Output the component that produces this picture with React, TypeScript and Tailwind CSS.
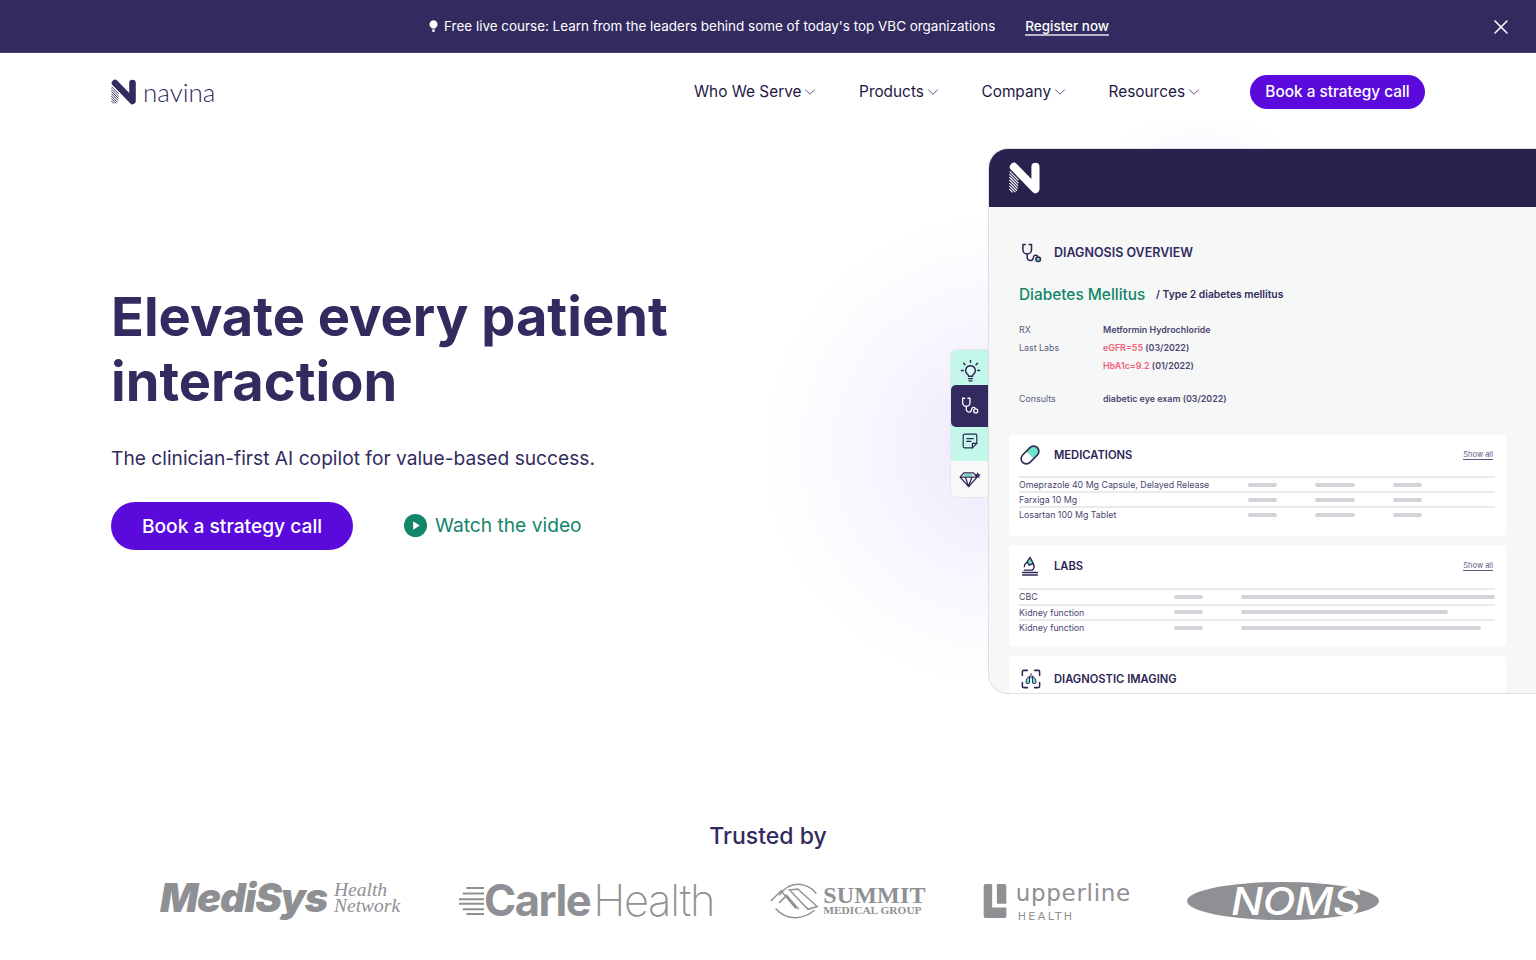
import { ChevronDown, X } from 'lucide-react';

const navItems = ['Who We Serve', 'Products', 'Company', 'Resources'];

const medications = ['Omeprazole 40 Mg Capsule, Delayed Release', 'Farxiga 10 Mg', 'Losartan 100 Mg Tablet'];

const labs = [
  { name: 'CBC', width: 'w-[254px]' },
  { name: 'Kidney function', width: 'w-[207px]' },
  { name: 'Kidney function', width: 'w-[240px]' },
];

function NLogo({ className, color }: { className: string; color: string }) {
  return (
    <svg viewBox="0 0 26 26" className={className} fill="none">
      <path d="M4 4 L21.5 22 L21.5 4" stroke={color} strokeWidth="6.6" strokeLinecap="round" strokeLinejoin="round" />
      <g stroke={color} strokeWidth="0.9" strokeLinecap="round">
        <path d="M0.8 8 L7.4 14.6" />
        <path d="M0.6 10.2 L7.4 17" />
        <path d="M0.6 12.6 L7.2 19.2" />
        <path d="M0.6 15 L6.8 21.2" />
        <path d="M0.6 17.4 L6.2 23" />
        <path d="M0.6 19.8 L5 24.2" />
        <path d="M0.6 22.2 L2.8 24.4" />
      </g>
    </svg>
  );
}

function Scope({ className, color, dot }: { className: string; color: string; dot: string }) {
  return (
    <svg viewBox="0 0 22 22" className={className} fill="none" stroke={color} strokeWidth="1.6" strokeLinecap="round" strokeLinejoin="round">
      <path d="M4.5 1.5H2v5.5a4.5 4.5 0 0 0 9 0V1.5H8.5" />
      <path d="M6.5 11.5v3.5a3.2 3.2 0 0 0 6.4 .4c.1-1.5 .6-2.4 2.1-2.6 .8-.1 1.6 .1 2.2 .9" />
      <circle cx="18" cy="17" r="2.4" fill={dot} />
    </svg>
  );
}

function Bar({ className }: { className: string }) {
  return <div className={`h-[4px] rounded-full bg-[#d3d4d9] ${className}`} />;
}

function ShowAll() {
  return <span className="ml-auto mr-[13px] border-b border-[#5d5880] text-[7.5px] leading-[9px] text-[#5d5880]">Show all</span>;
}

function Bulb() {
  return (
    <svg viewBox="0 0 24 24" className="mt-[6px] h-[23px] w-[23px]" fill="none" stroke="#2d2655" strokeWidth="1.5" strokeLinecap="round">
      <path d="M12 7a5 5 0 0 0-3 9c.8.7 1 1.3 1 2h4c0-.7.2-1.3 1-2a5 5 0 0 0-3-9z" fill="#d8fbf2" />
      <path d="M10 20.5h4M10.5 22.8h3" />
      <path d="M12 1.5v2M4.8 4.5l1.4 1.4M19.2 4.5l-1.4 1.4M2.5 12h2M19.5 12h2" />
    </svg>
  );
}

function DocIcon() {
  return (
    <svg viewBox="0 0 20 20" className="mb-[6px] h-[16px] w-[16px]" fill="none" stroke="#2d2655" strokeWidth="1.5" strokeLinecap="round" strokeLinejoin="round">
      <path d="M3 1.5h14A1.5 1.5 0 0 1 18.5 3v10l-5.5 5.5H3A1.5 1.5 0 0 1 1.5 17V3A1.5 1.5 0 0 1 3 1.5z" />
      <path d="M13 18.5V13h5.5" />
      <path d="M6 7h8M6 10.5h5" />
    </svg>
  );
}

function Diamond() {
  return (
    <svg viewBox="0 0 24 18" className="h-[17px] w-[23px]" fill="none" stroke="#2d2655" strokeWidth="1.4" strokeLinejoin="round">
      <path d="M5 2h10l4 4.5L10 16.5 1 6.5z" />
      <path d="M1 6.5h18M6.5 6.5L10 16.5l3.5-10" />
      <path d="M5 4.2h9" stroke="#35d0a8" strokeWidth="1.6" />
      <path d="M19.5 1l1 2.4 2.5.2-1.9 1.6.6 2.5-2.2-1.3-2.2 1.3.6-2.5L16 3.6l2.5-.2z" fill="#2d2655" stroke="none" />
    </svg>
  );
}

function Capsule() {
  return (
    <svg viewBox="0 0 22 22" className="h-[22px] w-[22px]" fill="none" stroke="#2d2655" strokeWidth="1.6">
      <g transform="rotate(-45 11 11)">
        <path d="M11 5.8h5.2a5.2 5.2 0 0 1 0 10.4H11z" fill="#6fe3c8" stroke="none" />
        <rect x="0.6" y="5.8" width="20.8" height="10.4" rx="5.2" />
      </g>
    </svg>
  );
}

function Microscope() {
  return (
    <svg viewBox="0 0 22 24" className="ml-[2px] h-[22px] w-[18px]" fill="none" stroke="#2d2655" strokeWidth="1.7" strokeLinecap="round" strokeLinejoin="round">
      <path d="M11 1.5l4 7.5-5 2-2.5-4z" fill="#6fe3c8" />
      <path d="M14.5 9a6 6 0 0 1-.5 8H4M7 8a6 6 0 0 0-3 5" />
      <path d="M2 20h18M2 23h18" />
    </svg>
  );
}

function Lungs() {
  return (
    <svg viewBox="0 0 22 22" className="ml-[2px] h-[20px] w-[20px]" fill="none" stroke="#2d2655" strokeWidth="1.7" strokeLinecap="round">
      <path d="M7 1.5H3A1.5 1.5 0 0 0 1.5 3v4M15 1.5h4A1.5 1.5 0 0 1 20.5 3v4M1.5 15v4A1.5 1.5 0 0 0 3 20.5h4M20.5 15v4a1.5 1.5 0 0 1-1.5 1.5h-4" />
      <path d="M9 8c-2 1-3.5 4-3.5 7 0 1 1 1.5 3.5.5zM13 8c2 1 3.5 4 3.5 7 0 1-1 1.5-3.5.5z" fill="#6fe3c8" strokeWidth="1.1" />
      <path d="M11 5v5" strokeWidth="1.1" />
    </svg>
  );
}

function PanelTitle({ icon, title, showAll }: { icon: React.ReactNode; title: string; showAll?: boolean }) {
  return (
    <div className="flex h-[38px] items-center">
      <div className="flex w-[35px] shrink-0 items-center">{icon}</div>
      <span className="text-[11.2px] font-semibold text-[#2d2655]">{title}</span>
      {showAll && <ShowAll />}
    </div>
  );
}

function Row({ children, tall }: { children: React.ReactNode; tall?: boolean }) {
  return (
    <div className={`flex w-[476px] items-center border-t-2 border-[#e9eaec] text-[8.8px] text-[#4b4670] ${tall ? 'h-[15.5px]' : 'h-[15.2px]'}`}>{children}</div>
  );
}

function PatientCard() {
  return (
    <div className="relative ml-auto mt-[17px] h-[546px] w-[548px] shrink-0">
      {/* Side tabs */}
      <div className="absolute left-[-37px] top-[202px] flex h-[147px] w-[38px] flex-col overflow-hidden rounded-l-[5px] bg-[#f8f8f9] shadow-[0_0_0_1px_#e6e6eb]">
        <div className="flex h-[111px] flex-col bg-[#c2f7ea]">
          <div className="flex h-[35px] items-center justify-center"><Bulb /></div>
          <div className="flex h-[42px] items-center justify-center rounded-l-[5px] bg-[#332b60]">
            <Scope className="h-[18px] w-[18px]" color="#ffffff" dot="#332b60" />
          </div>
          <div className="flex h-[34px] items-center justify-center"><DocIcon /></div>
        </div>
        <div className="flex flex-1 items-center justify-center"><Diamond /></div>
      </div>

      <div className="relative h-full overflow-hidden rounded-l-[20px] border border-r-0 border-[#dfe0e6] bg-[#f6f8f7]">
        <div className="flex h-[58px] items-center bg-[#27224e] pl-[20px]">
          <NLogo className="h-[32px] w-[32px]" color="#ffffff" />
        </div>

        <div className="pl-[30px] pt-[36px]">
          <div className="flex items-center">
            <Scope className="ml-[2px] h-[21px] w-[21px]" color="#2d2655" dot="#6fe3c8" />
            <span className="ml-[12px] text-[12.5px] font-semibold text-[#332b60]">DIAGNOSIS OVERVIEW</span>
          </div>
          <div className="mt-[19px] flex items-center">
            <span className="w-[137px] text-[15.4px] font-medium text-[#13866a]">Diabetes Mellitus</span>
            <span className="text-[10.3px] font-semibold text-[#332b60]">/ Type 2 diabetes mellitus</span>
          </div>
          <div className="mt-[15px] grid grid-cols-[84px_1fr] text-[8.9px] leading-[18px]">
            <span className="text-[#5d5880]">RX</span>
            <span className="font-semibold text-[#4b4670]">Metformin Hydrochloride</span>
            <span className="text-[#5d5880]">Last Labs</span>
            <span className="font-semibold text-[#4b4670]"><span className="text-[#f2607a]">eGFR=55</span> (03/2022)</span>
            <span />
            <span className="font-semibold text-[#4b4670]"><span className="text-[#f2607a]">HbA1c=9.2</span> (01/2022)</span>
            <span className="mt-[15px] text-[#5d5880]">Consults</span>
            <span className="mt-[15px] font-semibold text-[#4b4670]">diabetic eye exam (03/2022)</span>
          </div>
        </div>

        <div className="ml-[20px] mt-[27px] flex w-[497px] flex-col gap-[9px]">
          <div className="h-[101px] rounded-[4px] bg-white pl-[10px] pt-[1px]">
            <PanelTitle icon={<Capsule />} title="MEDICATIONS" showAll />
            <div className="mt-[2px]">
              {medications.map((med) => (
                <Row key={med}>
                  <span className="w-[229px] shrink-0">{med}</span>
                  <Bar className="w-[29px]" />
                  <Bar className="ml-[38px] w-[40px]" />
                  <Bar className="ml-[38px] w-[29px]" />
                </Row>
              ))}
            </div>
          </div>

          <div className="h-[101px] rounded-[4px] bg-white pl-[10px] pt-[2px]">
            <PanelTitle icon={<Microscope />} title="LABS" showAll />
            <div className="mt-[3px]">
              {labs.map((lab, index) => (
                <Row key={index} tall>
                  <span className="w-[155px] shrink-0">{lab.name}</span>
                  <Bar className="w-[29px]" />
                  <Bar className={`ml-[38px] ${lab.width}`} />
                </Row>
              ))}
            </div>
          </div>

          <div className="mt-[1px] h-[60px] rounded-[4px] bg-white pl-[10px] pt-[4px]">
            <PanelTitle icon={<Lungs />} title="DIAGNOSTIC IMAGING" />
          </div>
        </div>
      </div>
    </div>
  );
}

function TrustedLogos() {
  return (
    <div className="mt-[26px] flex items-center pl-[160px] text-[#8f9094]">
      {/* MediSys */}
      <div className="flex items-center">
        <span className="mb-[5px] w-[168px] text-[40px] font-black italic leading-none tracking-[-1.2px] font-['Inter',sans-serif]">MediSys</span>
        <span className="mb-[6px] ml-[6px] text-[19.5px] italic leading-[16px] font-['Liberation_Serif',serif]">Health<br />Network</span>
      </div>
      {/* Carle Health */}
      <div className="ml-[59px] flex items-center">
        <svg viewBox="0 0 27 34" className="h-[34px] w-[25px]" stroke="#8f9094" strokeWidth="2.2">
          <path d="M8 3h19M4 9h23M0 15h27M0 20h27M4 26h23M8 31h19" />
        </svg>
        <span className="text-[43.5px] font-bold leading-none tracking-[-1.5px] font-['Inter',sans-serif]">Carle</span>
        <span className="ml-[3px] text-[43.5px] font-extralight leading-none tracking-[-1.3px] font-['Inter',sans-serif]">Health</span>
      </div>
      {/* Summit */}
      <div className="ml-[56px] flex items-center">
        <svg viewBox="0 0 54 40" className="h-[40px] w-[50px]" fill="none" stroke="#8f9094" strokeWidth="1.6">
          <path d="M10 14C16 5 24 2 30 2c8 0 16 4 20 10M6 28c6 7 14 10 22 10 8 0 14-3 20-8" />
          <path d="M1 20 12 9l16 19M10 22l8-8 13 15M21 8l9-1 21 19-10 3L21 8z" />
        </svg>
        <div className="ml-[3px] font-['Liberation_Serif',serif] font-bold">
          <div className="text-[24px] leading-[20px] tracking-[0.2px]">SUMMIT</div>
          <div className="text-[11.4px] leading-[11px]">MEDICAL GROUP</div>
        </div>
      </div>
      {/* Upperline */}
      <div className="ml-[57px] flex items-center">
        <svg viewBox="0 0 24 36" className="h-[34px] w-[24px]" fill="#8f9094">
          <path d="M2 0h6a1 1 0 0 1 1 1v24h15v9a2 2 0 0 1-2 2H2a2 2 0 0 1-2-2V2a2 2 0 0 1 2-2z" />
          <path d="M14 0h8a2 2 0 0 1 2 2v19H14z" />
        </svg>
        <div className="ml-[9px] font-['DejaVu_Sans',sans-serif]">
          <div className="text-[23px] leading-[30px] tracking-[0.7px]">upperline</div>
          <div className="ml-[2px] mt-[3px] text-[11px] leading-[12px] tracking-[2.4px]">HEALTH</div>
        </div>
      </div>
      {/* NOMS */}
      <div className="ml-[56px] flex h-[38px] w-[192px] items-center justify-center rounded-[50%] bg-[#8f9094] pl-[26px]">
        <span className="inline-block scale-x-[1.12] text-[38px] font-medium italic leading-none tracking-[-0.5px] text-white font-['Inter',sans-serif]">NOMS</span>
      </div>
    </div>
  );
}

export default function App() {
  return (
    <div className="relative h-[960px] w-full overflow-hidden bg-white font-['Inter',sans-serif] text-[#332b60]">
      {/* Banner */}
      <div className="relative z-10 flex h-[53px] items-center justify-center border-b border-[#4a4378] bg-[#332b60] pl-[2px] text-white">
        <svg viewBox="0 0 10 14" className="mr-[6px] h-[13px] w-[9px]" fill="#ffffff">
          <path d="M5 0a4.4 4.4 0 0 0-2.6 8c.4.3.6.8.6 1.3h4c0-.5.2-1 .6-1.3A4.4 4.4 0 0 0 5 0zM3.4 10.2h3.2L6 13H4z" />
        </svg>
        <span className="text-[13.44px]">Free live course: Learn from the leaders behind some of today's top VBC organizations</span>
        <span className="ml-[30px] mt-[2px] border-b-2 border-[#b9b6cc] text-[13.44px] font-medium leading-[16px]">Register now</span>
        <X className="absolute right-[23px] top-[15px] h-[24px] w-[24px] text-white" strokeWidth={1.5} />
      </div>

      {/* Nav */}
      <nav className="relative z-10 flex h-[78px] items-center px-[111px]">
        <div className="flex items-center">
          <NLogo className="h-[26px] w-[26px]" color="#332b60" />
          <span className="mb-[1px] ml-[6px] text-[26px] font-light leading-none text-[#332b60] font-['Lato',sans-serif]">navina</span>
        </div>
        <div className="mb-[1px] ml-auto flex items-center gap-[39.6px]">
          {navItems.map((item) => (
            <div key={item} className="flex items-center text-[15.36px] text-[#1f1a45]">
              {item}
              <ChevronDown className="h-[18px] w-[18px] text-[#4b4670]" strokeWidth={1.2} />
            </div>
          ))}
        </div>
        <div className="mb-[1px] ml-[47px] flex h-[34px] w-[175px] items-center justify-center rounded-full bg-[#5a0bdb] text-[15.36px] font-medium text-white">
          Book a strategy call
        </div>
      </nav>

      {/* Glow behind card */}
      <div className="absolute left-[720px] top-[170px] h-[560px] w-[560px] rounded-full bg-[radial-gradient(circle,#ede7fb_0%,#f7f5fe_30%,#ffffff00_60%)]" />
      <div className="absolute left-[1040px] top-[120px] h-[200px] w-[320px] rounded-full bg-[radial-gradient(circle,#f3effd_0%,#ffffff00_60%)]" />

      {/* Hero */}
      <section className="relative flex h-[693px]">
        <div className="pl-[111px] pt-[153px]">
          <h1 className="text-[54.2px] font-bold leading-[65px] text-[#332b60]">
            Elevate every patient<br />interaction
          </h1>
          <p className="mt-[28px] text-[19.2px] leading-[32px] text-[#332b60]">
            The clinician-first AI copilot for value-based success.
          </p>
          <div className="mt-[28px] flex items-center">
            <div className="flex h-[48px] w-[242px] items-center justify-center rounded-full bg-[#5a0bdb] text-[19.2px] font-medium text-white">
              Book a strategy call
            </div>
            <div className="mb-[1px] ml-[51px] flex items-center text-[19.2px] text-[#13866a]">
              <svg viewBox="0 0 24 24" className="mr-[8px] h-[23px] w-[23px]">
                <circle cx="12" cy="12" r="12" fill="#13866a" />
                <path d="M9.5 7.5 L16.5 12 L9.5 16.5 Z" fill="#ffffff" />
              </svg>
              Watch the video
            </div>
          </div>
        </div>
        <PatientCard />
      </section>

      {/* Trusted by */}
      <section className="relative">
        <h2 className="mt-[-4px] text-center text-[23.04px] font-medium leading-[32px] text-[#332b60]">Trusted by</h2>
        <TrustedLogos />
      </section>
    </div>
  );
}
